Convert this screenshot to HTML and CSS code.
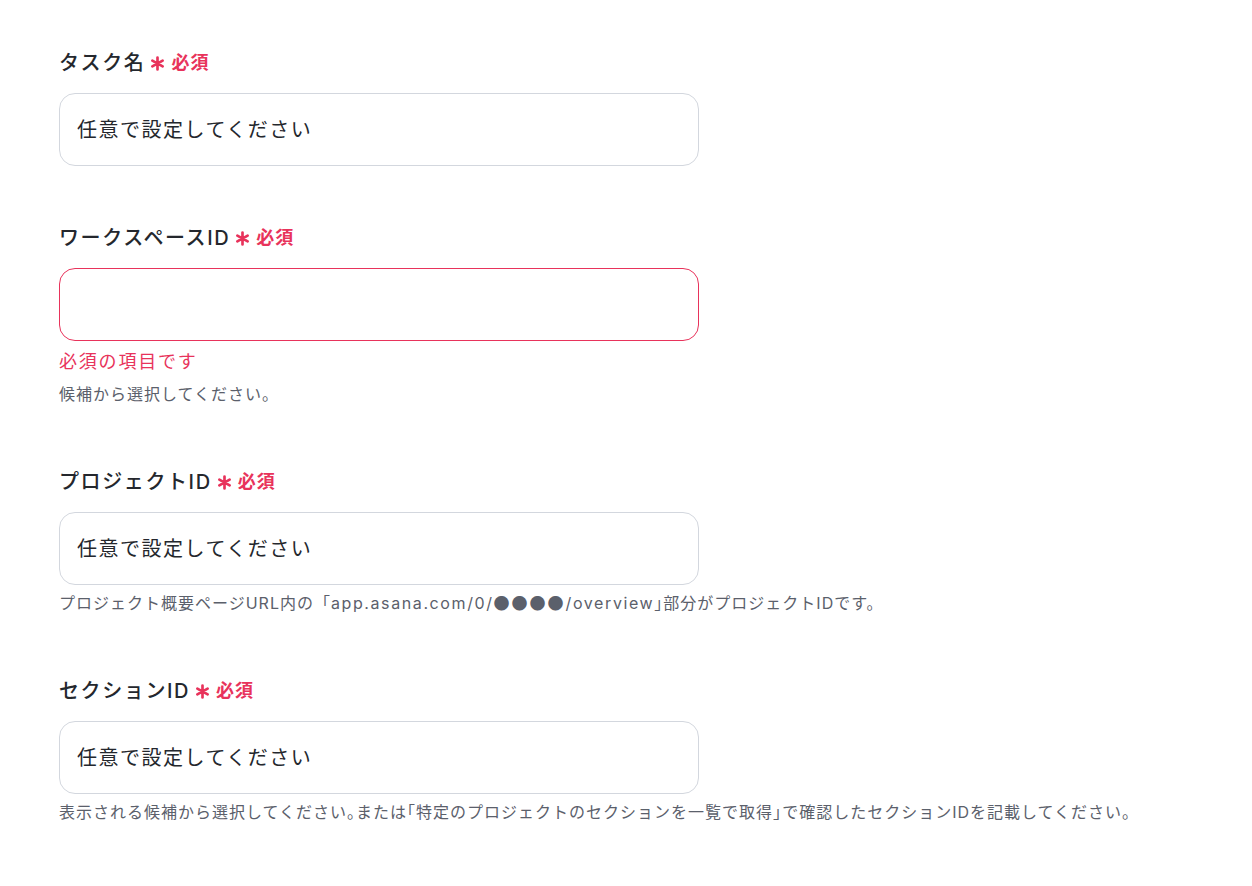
FILE: index.html
```html
<!DOCTYPE html>
<html lang="ja">
<head>
  <meta charset="UTF-8" />
  <meta name="viewport" content="width=device-width, initial-scale=1.0"/>
  <title>Asana タスク設定</title>
  <link rel="stylesheet" href="styles.css">
</head>
<body>

  <form class="settings">

    <div class="field">
      <label class="field-label" for="task-name">タスク名
        <span class="req"><svg class="req-mark" viewBox="0 0 14 14"><path d="M7 1.5v11M2.2 4.25l9.6 5.5M2.2 9.75l9.6-5.5"/></svg>必須</span>
      </label>
      <input class="text-input" id="task-name" type="text" placeholder="任意で設定してください">
    </div>

    <div class="field">
      <label class="field-label" for="workspace-id">ワークスペースID
        <span class="req"><svg class="req-mark" viewBox="0 0 14 14"><path d="M7 1.5v11M2.2 4.25l9.6 5.5M2.2 9.75l9.6-5.5"/></svg>必須</span>
      </label>
      <input class="text-input has-error" id="workspace-id" type="text">
      <p class="error-text">必須の項目です</p>
      <p class="hint">候補から選択してください。</p>
    </div>

    <div class="field">
      <label class="field-label" for="project-id">プロジェクトID
        <span class="req"><svg class="req-mark" viewBox="0 0 14 14"><path d="M7 1.5v11M2.2 4.25l9.6 5.5M2.2 9.75l9.6-5.5"/></svg>必須</span>
      </label>
      <input class="text-input" id="project-id" type="text" placeholder="任意で設定してください">
      <p class="hint">プロジェクト概要ページURL内の「<span class="url">app.asana.com/0/<span class="dots">●●●●</span>/overview</span><span class="br">」</span>部分がプロジェクトIDです。</p>
    </div>

    <div class="field">
      <label class="field-label" for="section-id">セクションID
        <span class="req"><svg class="req-mark" viewBox="0 0 14 14"><path d="M7 1.5v11M2.2 4.25l9.6 5.5M2.2 9.75l9.6-5.5"/></svg>必須</span>
      </label>
      <input class="text-input" id="section-id" type="text" placeholder="任意で設定してください">
      <p class="hint">表示される候補から選択してください<span class="br">。</span>または<span class="br">「</span>特定のプロジェクトのセクションを一覧で取得<span class="br">」</span>で確認したセクションIDを記載してください。</p>
    </div>

  </form>

</body>
</html>
```

FILE: styles.css
```css
body {
  margin: 0;
  background: #ffffff;
  color: #24272d;
  font-family: Inter, "Noto Sans CJK JP", sans-serif;
}
.settings {
  padding: 47px 0 0 59px;
}
.field {
  margin-bottom: 56px;
}
.field-label {
  display: flex;
  align-items: center;
  height: 28px;
  font-size: 20px;
  font-weight: 500;
  letter-spacing: 1.6px;
}
.req {
  display: inline-flex;
  align-items: center;
  margin-left: 5px;
  color: #e8335b;
  font-size: 18px;
  font-weight: 600;
  letter-spacing: 1px;
}
.req-mark {
  width: 15px;
  height: 15px;
  margin: 4px 6px 0 0;
  fill: none;
  stroke: #e8335b;
  stroke-width: 2.5;
  stroke-linecap: round;
}
.text-input {
  display: block;
  box-sizing: border-box;
  width: 640px;
  height: 73px;
  margin-top: 18px;
  padding: 0 17px;
  border: 1px solid #d3d7de;
  border-radius: 16px;
  background: #fff;
  font-family: inherit;
  font-size: 20px;
  letter-spacing: 1.5px;
  color: #24272d;
  outline: none;
}
.text-input::placeholder {
  color: #24272d;
  opacity: 1;
}
.text-input.has-error {
  border-color: #e8335b;
}
.error-text {
  margin: 9px 0 0;
  color: #e8335b;
  font-size: 18px;
  line-height: 24px;
  letter-spacing: 1.8px;
}
.hint {
  margin: 7px 0 0;
  padding-bottom: 6px;
  color: #5b606b;
  font-size: 16px;
  line-height: 20px;
  letter-spacing: 1px;
}
.error-text + .hint {
  margin-top: 10px;
}
/* half-width brackets and the full-width masked id */
.hint .br {
  font-family: "Noto Sans CJK JP", sans-serif;
  font-feature-settings: "halt";
}
.hint .url {
  letter-spacing: 1.6px;
}
.hint .dots {
  font-family: "Noto Sans CJK JP", sans-serif;
  letter-spacing: 2px;
}
```
